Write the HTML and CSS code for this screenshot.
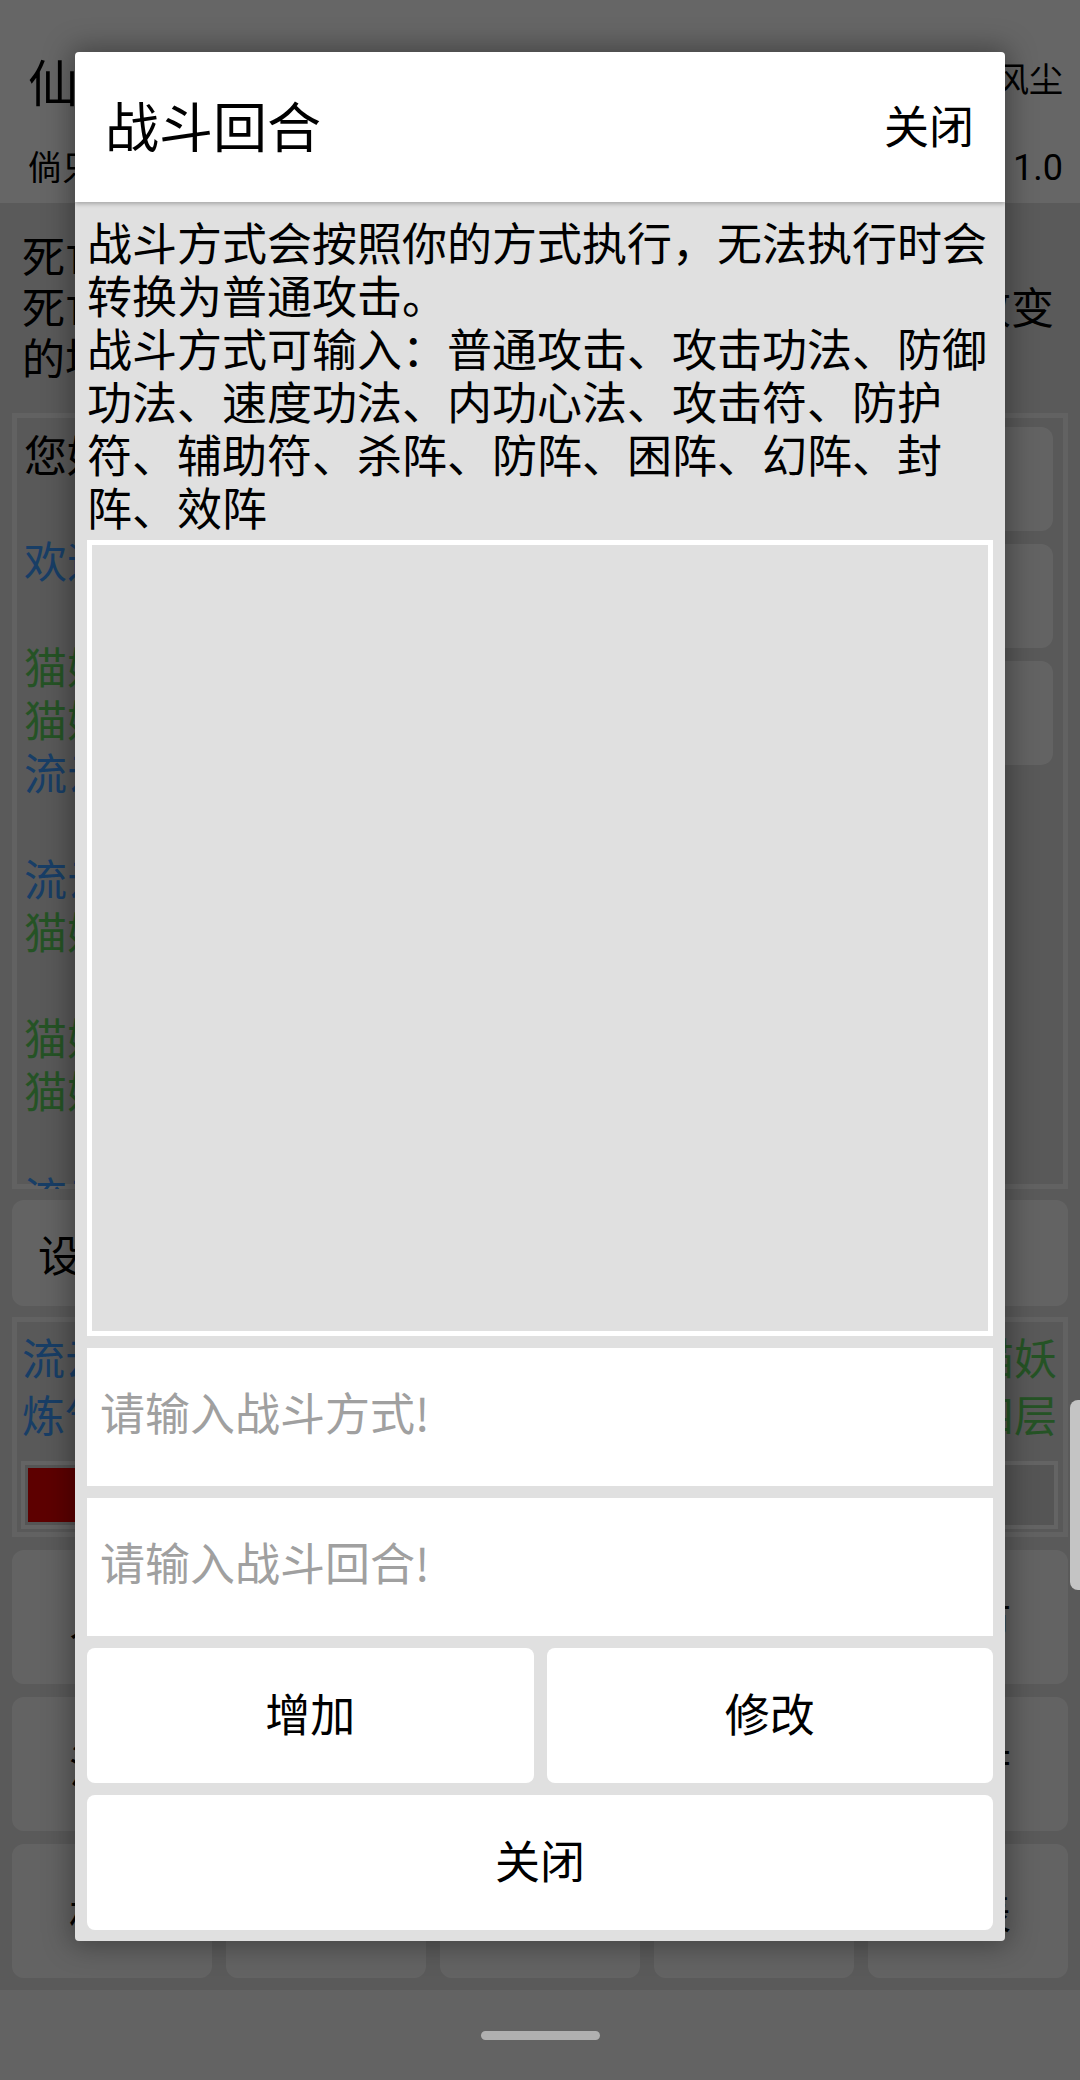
FILE: index.html
```html
<!DOCTYPE html>
<html lang="zh-CN">
<head>
  <meta charset="UTF-8">
  <title>仙途修炼</title>
  <link rel="stylesheet" href="styles.css">
</head>
<body>

  <div class="app">
    <header class="app-bar">
      <div class="bar-row">
        <span class="app-title">仙途修炼</span>
        <span class="app-user">一路风尘</span>
      </div>
      <div class="bar-row sub">
        <span>倘只是一场梦</span>
        <span>版本 <span class="app-ver">1.0</span></span>
      </div>
    </header>

    <main class="app-main">
      <div class="notice">
        <div>死亡后将在城镇复活。</div>
        <div>死亡后会损失一成的修为，修为不足时境界会随之改变</div>
        <div>的境界将无法恢复。</div>
      </div>

      <div class="log-box">
        <div class="log">
          <div>您好，欢迎来到修仙世界！</div>
          <div>&nbsp;</div>
          <div class="blue">欢迎道友流云踏入仙途。</div>
          <div>&nbsp;</div>
          <div class="green">猫妖对你发起了攻击。</div>
          <div class="green">猫妖对你造成了35点伤害。</div>
          <div class="blue">流云使用普通攻击，造成42点伤害。</div>
          <div>&nbsp;</div>
          <div class="blue">流云使用攻击功法，造成88点伤害。</div>
          <div class="green">猫妖对你造成了31点伤害。</div>
          <div>&nbsp;</div>
          <div class="green">猫妖发动了防御。</div>
          <div class="green">猫妖对你造成了29点伤害。</div>
          <div>&nbsp;</div>
          <div class="blue">流云使用攻击符，造成120点伤害。</div>
        </div>
        <div class="side-btns">
          <div class="side-btn">挑战</div>
          <div class="side-btn">逃跑</div>
          <div class="side-btn">清空</div>
        </div>
      </div>

      <div class="set-row">设置战斗方式</div>

      <div class="status-box">
        <div class="status-line">
          <span class="blue">流云（炼气期）</span>
          <span class="green">当前敌人：猫妖</span>
        </div>
        <div class="status-line">
          <span class="blue">炼气进度：</span>
          <span class="green">锁妖塔第四层</span>
        </div>
        <div class="hp-bar">
          <div class="hp-fill" style="width: 62%;"></div>
        </div>
      </div>

      <div class="menu-grid">
        <div class="menu-btn">人物</div>
        <div class="menu-btn">背包</div>
        <div class="menu-btn">修炼</div>
        <div class="menu-btn">功法</div>
        <div class="menu-btn">坊市</div>
        <div class="menu-btn">法宝</div>
        <div class="menu-btn">丹药</div>
        <div class="menu-btn">宗门</div>
        <div class="menu-btn">任务</div>
        <div class="menu-btn">洞府</div>
        <div class="menu-btn">材料</div>
        <div class="menu-btn">炼丹</div>
        <div class="menu-btn">炼器</div>
        <div class="menu-btn">设置</div>
        <div class="menu-btn">列表</div>
      </div>
    </main>
  </div>

  <!-- 弹窗遮罩 -->
  <div class="scrim"></div>
  <div class="scroll-thumb"></div>

  <div class="nav-bar">
    <span class="nav-handle"></span>
  </div>

  <div class="dialog">
    <div class="dlg-head">
      <h2 class="dlg-title">战斗回合</h2>
      <a class="dlg-close">关闭</a>
    </div>
    <div class="dlg-body">
      <p class="dlg-tip">战斗方式会按照你的方式执行，无法执行时会转换为普通攻击。<br>战斗方式可输入：普通攻击、攻击功法、防御功法、速度功法、内功心法、攻击符、防护符、辅助符、杀阵、防阵、困阵、幻阵、封阵、效阵</p>
      <div class="round-list"></div>
      <input class="dlg-input" type="text" placeholder="请输入战斗方式!">
      <input class="dlg-input" type="text" placeholder="请输入战斗回合!">
      <div class="btn-row">
        <button class="dlg-btn">增加</button>
        <button class="dlg-btn">修改</button>
      </div>
      <button class="dlg-btn wide">关闭</button>
    </div>
  </div>

</body>
</html>
```

FILE: styles.css
```css
* {
  box-sizing: border-box;
}

body {
  margin: 0;
  width: 1080px;
  height: 2080px;
  overflow: hidden;
  position: relative;
  display: flex;
  flex-direction: column;
  font-family: "Noto Sans CJK SC", "Noto Sans", sans-serif;
  color: #000;
  background: #e1e1e1;
}

/* 主界面 */
.app {
  height: 1990px;
  flex-shrink: 0;
  background: #e1e1e1;
}

.app-bar {
  height: 203px;
  background: #fff;
  padding: 50px 17px 0 28px;
}

.bar-row {
  display: flex;
  justify-content: space-between;
  align-items: center;
  height: 60px;
}

.app-title {
  font-size: 50px;
  line-height: 60px;
}

.app-user {
  font-size: 34px;
  margin-bottom: 6px;
}

.bar-row.sub {
  margin-top: 30px;
  height: 50px;
  font-size: 34px;
}

.app-ver {
  font-family: Roboto, sans-serif;
  font-size: 36px;
}

.app-main {
  padding: 0 12px;
}

.notice {
  padding: 26px 0 0 10px;
  font-size: 43px;
  line-height: 51px;
  white-space: nowrap;
}

.blue {
  color: #3d9bff;
}

.green {
  color: #5cd05c;
}

.log-box {
  margin-top: 31px;
  height: 776px;
  border: 5px solid #f5f5f5;
  padding: 9px 10px 0 7px;
  display: flex;
  background: #dedede;
}

.log {
  flex: 1;
  height: 762px;
  overflow: hidden;
  font-size: 43px;
  line-height: 53px;
  white-space: nowrap;
}

.side-btns {
  width: 230px;
  display: flex;
  flex-direction: column;
  gap: 13px;
}

.side-btn {
  height: 104px;
  border-radius: 12px;
  background: #f8f8f8;
  font-size: 40px;
  display: flex;
  align-items: center;
  justify-content: center;
}

.set-row {
  margin-top: 11px;
  height: 106px;
  border-radius: 12px;
  background: #f8f8f8;
  padding-left: 26px;
  font-size: 43px;
  display: flex;
  align-items: center;
}

.status-box {
  margin-top: 11px;
  height: 220px;
  border: 5px solid #f5f5f5;
  padding: 6px 6px 0 5px;
  background: #dedede;
}

.status-line {
  display: flex;
  justify-content: space-between;
  font-size: 43px;
  line-height: 57px;
  white-space: nowrap;
}

.hp-bar {
  margin: 19px -1px 0;
  height: 68px;
  border: 4px solid #fafafa;
  padding: 3px;
  background: #d4d4d4;
}

.hp-fill {
  height: 100%;
  background: #e80000;
}

.menu-grid {
  margin-top: 13px;
  display: grid;
  grid-template-columns: repeat(5, 1fr);
  grid-auto-rows: 134px;
  gap: 13px 14px;
}

.menu-btn {
  border-radius: 12px;
  background: #f8f8f8;
  font-size: 43px;
  display: flex;
  align-items: center;
  justify-content: center;
}

/* 遮罩与系统栏 */
.scrim {
  position: absolute;
  left: 0;
  top: 0;
  width: 1080px;
  height: 1990px;
  background: rgba(0, 0, 0, 0.6);
}

.scroll-thumb {
  position: absolute;
  right: 0;
  top: 1400px;
  width: 10px;
  height: 190px;
  border-radius: 8px 0 0 8px;
  background: #c4c4c4;
}

.nav-bar {
  height: 90px;
  background: #636363;
  display: flex;
  justify-content: center;
  padding-top: 41px;
}

.nav-handle {
  width: 119px;
  height: 9px;
  border-radius: 5px;
  background: #b0b0b0;
}

/* 战斗回合弹窗 */
.dialog {
  position: absolute;
  left: 75px;
  top: 52px;
  width: 930px;
  border-radius: 4px;
  overflow: hidden;
  box-shadow: 0 0 28px 4px rgba(0, 0, 0, 0.35);
}

.dlg-head {
  position: relative;
  z-index: 1;
  height: 150px;
  background: #fff;
  padding: 0 31px 5px 30px;
  display: flex;
  justify-content: space-between;
  align-items: center;
  box-shadow: 0 2px 4px rgba(0, 0, 0, 0.25);
}

.dlg-title {
  margin: 0;
  font-size: 54px;
  font-weight: normal;
}

.dlg-close {
  font-size: 45px;
  cursor: pointer;
}

.dlg-body {
  background: #e0e0e0;
  padding: 13px 12px 11px;
  display: flex;
  flex-direction: column;
}

.dlg-tip {
  margin: 0;
  font-size: 45px;
  line-height: 53px;
}

.round-list {
  margin-top: 7px;
  height: 796px;
  border: 5px solid #fff;
  background: #e0e0e0;
}

.dlg-input {
  margin-top: 12px;
  height: 138px;
  border: none;
  outline: none;
  background: #fff;
  padding: 0 13px 12px;
  font-family: inherit;
  font-size: 45px;
  color: #000;
}

.dlg-input::placeholder {
  color: #a0a0a0;
}

.btn-row {
  margin-top: 12px;
  display: grid;
  grid-template-columns: 1fr 1fr;
  gap: 13px;
}

.dlg-btn {
  height: 135px;
  border: none;
  border-radius: 8px;
  background: #fff;
  padding: 0 0 6px;
  font-family: inherit;
  font-size: 45px;
  color: #000;
  cursor: pointer;
}

.dlg-btn.wide {
  margin-top: 12px;
}
```
